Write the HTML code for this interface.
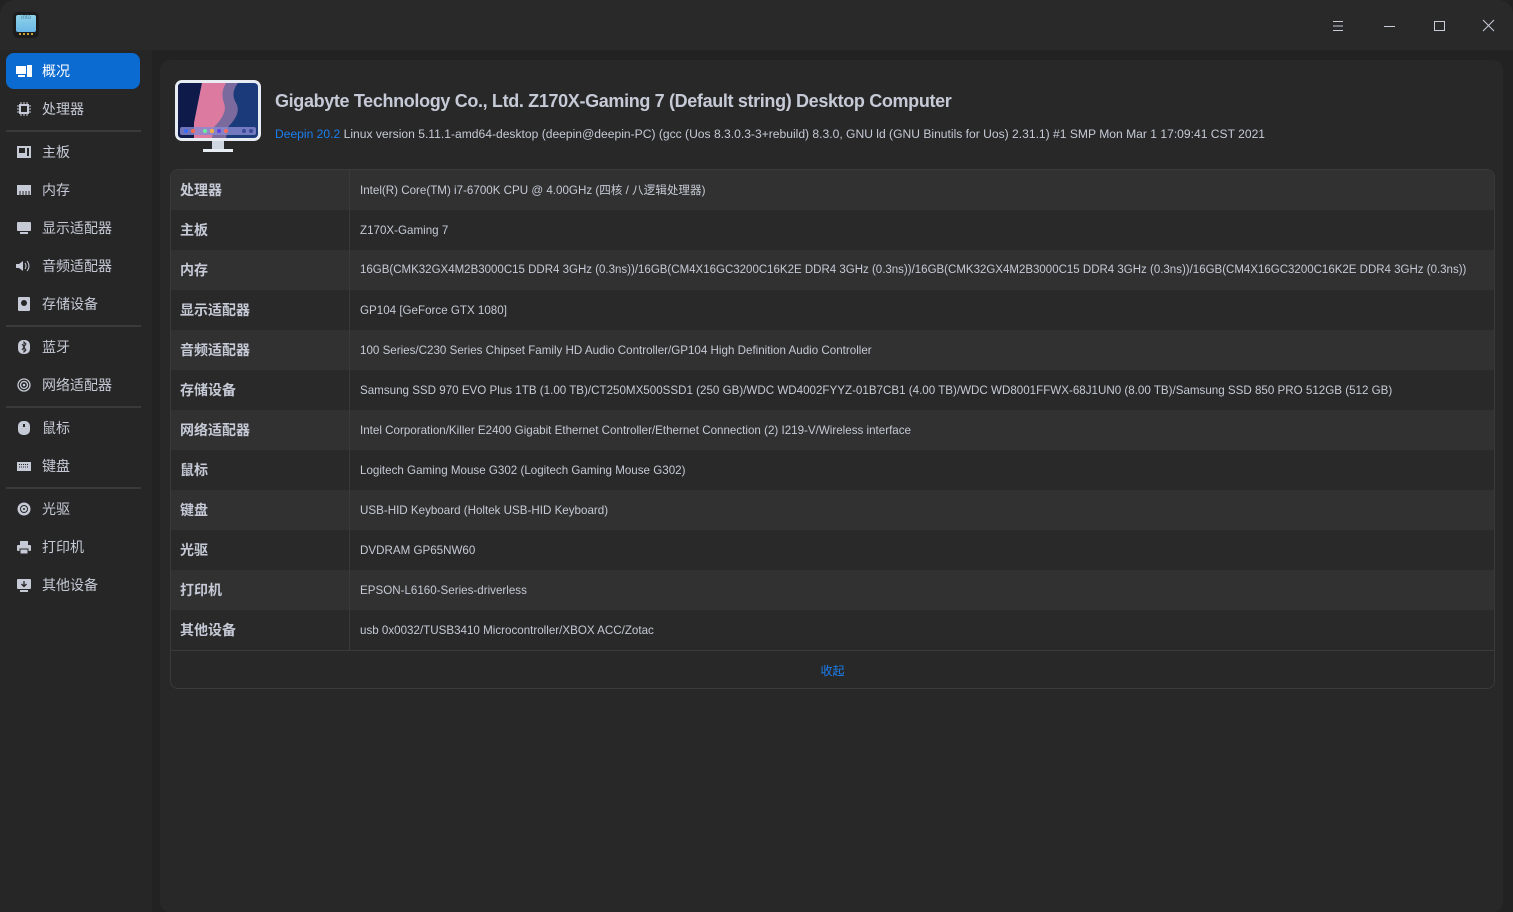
<!DOCTYPE html>
<html><head><meta charset="utf-8"><style>
*{margin:0;padding:0;box-sizing:border-box}
body{width:1513px;height:912px;background:#222;font-family:"Liberation Sans","Noto Sans CJK SC",sans-serif;color:#c5cad6;overflow:hidden;position:relative}
.win{position:absolute;inset:0;background:#222;border-radius:14px 14px 0 0;overflow:hidden}
.tb{position:absolute;left:0;top:0;width:1513px;height:50px;background:#292929}
.side{position:absolute;left:0;top:50px;width:152px;height:862px;background:#262626}
.main{position:absolute;left:152px;top:50px;right:0;bottom:0;background:#222}
.panel{position:absolute;left:160px;top:60px;width:1343px;height:852px;background:#282828;border-radius:10px}
.nav{position:absolute;left:6px;width:134px;height:36px;display:flex;align-items:center;font-size:14px;color:#c5cad6}
.nav .ic{width:16px;height:14px;margin-left:10px;margin-right:10px;display:flex;align-items:center;justify-content:center}
.nav.act{background:#0c6bd0;border-radius:8px;color:#fff}
.sep{position:absolute;left:6px;width:135px;height:2px;background:#3a3a3a}
.card{position:absolute;left:170px;top:169px;width:1325px;height:520px;border:1px solid #3a3a3a;border-radius:8px;overflow:hidden;background:#282828}
.row{height:40px;display:flex;align-items:center;font-size:11.6px}
.row:nth-child(odd){background:#313131}
.row:nth-child(even){background:#292929}
.k{flex:0 0 179px;width:179px;padding-left:9px;font-weight:bold;font-size:14px;border-right:1px solid #3a3a3a;height:40px;display:flex;align-items:center}
.v{padding-left:10px;white-space:nowrap}
</style></head><body><div class="win">
<div class="tb">
 <div style="position:absolute;left:13px;top:12px;width:26px;height:26px;background:#1c1c1c;border-radius:5px"><div style="position:absolute;left:3px;top:3px;width:20px;height:17px;background:linear-gradient(#8fd3e8,#6ab7e8);border-radius:2px;font-size:6px;color:#4a7fa0;text-align:center">info</div><div style="position:absolute;left:6px;top:21px;width:14px;height:2px;border-top:2px dotted #c9a23a"></div></div>
 <svg style="position:absolute;left:1332px;top:20px" width="12" height="12"><path d="M1 1.5h10M1 6h10M1 10.5h10" stroke="#c8ccd8" stroke-width="1"/></svg>
 <svg style="position:absolute;left:1383px;top:20px" width="13" height="12"><path d="M1 6.5h11" stroke="#c8ccd8" stroke-width="1"/></svg>
 <svg style="position:absolute;left:1433px;top:20px" width="13" height="12"><rect x="1.5" y="1.5" width="10" height="9" fill="none" stroke="#c8ccd8" stroke-width="1"/></svg>
 <svg style="position:absolute;left:1482px;top:19px" width="13" height="13"><path d="M1 1l11 11M12 1L1 12" stroke="#c8ccd8" stroke-width="1"/></svg>
</div>
<div class="side">
 <div class="nav act" style="top:3px"><span class="ic"><svg width="16" height="12"><rect x="0" y="1" width="10" height="8" fill="#fff"/><rect x="11" y="0" width="5" height="12" fill="#fff"/><rect x="2" y="10" width="7" height="2" fill="#fff"/></svg></span>概况</div>
 <div class="nav" style="top:41px"><span class="ic"><svg width="14" height="14"><rect x="2" y="2" width="10" height="10" fill="#c5cad6"/><path d="M4 0v14M7 0v14M10 0v14M0 4h14M0 7h14M0 10h14" stroke="#c5cad6" stroke-width="1"/><rect x="4" y="4" width="6" height="6" fill="#262626"/></svg></span>处理器</div>
 <div class="sep" style="top:80px"></div>
 <div class="nav" style="top:84px"><span class="ic"><svg width="14" height="12"><rect width="14" height="12" fill="#c5cad6"/><rect x="2" y="2" width="6" height="5" fill="#262626"/><rect x="10" y="2" width="2" height="8" fill="#262626"/></svg></span>主板</div>
 <div class="nav" style="top:122px"><span class="ic"><svg width="14" height="10"><rect width="14" height="10" fill="#c5cad6"/><path d="M3 6v4M6 6v4M9 6v4M12 6v4" stroke="#262626"/></svg></span>内存</div>
 <div class="nav" style="top:160px"><span class="ic"><svg width="14" height="12"><rect width="14" height="9" rx="1" fill="#c5cad6"/><rect x="3" y="10" width="8" height="2" fill="#c5cad6"/></svg></span>显示适配器</div>
 <div class="nav" style="top:198px"><span class="ic"><svg width="16" height="12"><path d="M0 4h3l4-3v10l-4-3H0z" fill="#c5cad6"/><path d="M9 3q2 3 0 6M11 1q4 5 0 10" stroke="#c5cad6" fill="none"/></svg></span>音频适配器</div>
 <div class="nav" style="top:236px"><span class="ic"><svg width="12" height="14"><rect width="12" height="14" rx="1" fill="#c5cad6"/><circle cx="6" cy="6" r="3" fill="#262626"/></svg></span>存储设备</div>
 <div class="sep" style="top:275px"></div>
 <div class="nav" style="top:279px"><span class="ic"><svg width="12" height="14"><rect width="12" height="14" rx="5" fill="#c5cad6"/><path d="M4 4l4 6-2 2V2l2 2-4 6" stroke="#262626" fill="none"/></svg></span>蓝牙</div>
 <div class="nav" style="top:317px"><span class="ic"><svg width="14" height="14"><circle cx="7" cy="7" r="6" stroke="#c5cad6" fill="none" stroke-width="1.3"/><circle cx="7" cy="7" r="3.5" stroke="#c5cad6" fill="none" stroke-width="1.3"/><circle cx="7" cy="7" r="1.3" fill="#c5cad6"/></svg></span>网络适配器</div>
 <div class="sep" style="top:356px"></div>
 <div class="nav" style="top:360px"><span class="ic"><svg width="12" height="14"><rect width="12" height="14" rx="5" fill="#c5cad6"/><rect x="5" y="3" width="2" height="3" fill="#262626"/></svg></span>鼠标</div>
 <div class="nav" style="top:398px"><span class="ic"><svg width="14" height="9"><rect width="14" height="9" fill="#c5cad6"/><path d="M2 2.5h10M2 5h10" stroke="#262626" stroke-dasharray="1 1"/></svg></span>键盘</div>
 <div class="sep" style="top:437px"></div>
 <div class="nav" style="top:441px"><span class="ic"><svg width="14" height="14"><circle cx="7" cy="7" r="6.5" fill="#c5cad6"/><circle cx="7" cy="7" r="3.5" fill="none" stroke="#262626"/><circle cx="7" cy="7" r="1" fill="#262626"/></svg></span>光驱</div>
 <div class="nav" style="top:479px"><span class="ic"><svg width="14" height="13"><rect x="3" y="0" width="8" height="4" fill="#c5cad6"/><rect x="0" y="4" width="14" height="6" rx="1" fill="#c5cad6"/><rect x="3" y="8" width="8" height="5" fill="#c5cad6" stroke="#262626"/></svg></span>打印机</div>
 <div class="nav" style="top:517px"><span class="ic"><svg width="14" height="13"><rect width="14" height="10" rx="1" fill="#c5cad6"/><path d="M7 2v5M4.5 5L7 7.5 9.5 5" stroke="#262626" fill="none" stroke-width="1.3"/><rect x="3" y="11" width="8" height="2" fill="#c5cad6"/></svg></span>其他设备</div>
</div>
<div class="main"></div>
<div class="panel"></div>
<svg style="position:absolute;left:174px;top:79px" width="88" height="75">
 <rect x="1" y="1" width="86" height="61" rx="7" fill="#e8ecf3"/>
 <rect x="4" y="4" width="80" height="55" rx="4" fill="#1a3a7a"/>
 <path d="M4 8q0-4 4-4h20l-8 40v15H8q-4 0-4-4z" fill="#0e1a4a"/>
 <path d="M28 4h36q-8 10-2 20t-8 24l-2 11H20l0-15z" fill="#7a6a9e"/>
 <path d="M28 4h24q-6 10-2 20t-10 24l-2 11H20l0-15z" fill="#dc7aa0"/>
 <rect x="6" y="48" width="76" height="8" rx="2" fill="#8a8ad0" opacity=".8"/>
 <circle cx="12" cy="52" r="2" fill="#3a6aff"/><circle cx="19" cy="52" r="2" fill="#ff6a4a"/><circle cx="31" cy="52" r="2" fill="#6af0a0"/><circle cx="38" cy="52" r="2" fill="#ffb040"/><circle cx="45" cy="52" r="2" fill="#6040e0"/><circle cx="52" cy="52" r="2" fill="#ff6a5a"/><circle cx="70" cy="52" r="2" fill="#3a4a9a"/><circle cx="77" cy="52" r="2" fill="#3a4a9a"/>
 <rect x="38" y="62" width="12" height="8" fill="#d0d6e0"/><rect x="29" y="70" width="30" height="3" fill="#e8ecf3"/>
</svg>
<div style="position:absolute;left:275px;top:91px;font-size:18px;letter-spacing:-0.35px;font-weight:bold;color:#c5cad6;white-space:nowrap">Gigabyte Technology Co., Ltd. Z170X-Gaming 7 (Default string) Desktop Computer</div>
<div style="position:absolute;left:275px;top:127px;font-size:12.1px;white-space:nowrap"><span style="color:#1a7ff0">Deepin 20.2</span> Linux version 5.11.1-amd64-desktop (deepin@deepin-PC) (gcc (Uos 8.3.0.3-3+rebuild) 8.3.0, GNU ld (GNU Binutils for Uos) 2.31.1) #1 SMP Mon Mar 1 17:09:41 CST 2021</div>
<div class="card">
 <div class="row"><div class="k">处理器</div><div class="v">Intel(R) Core(TM) i7-6700K CPU @ 4.00GHz (四核 / 八逻辑处理器)</div></div>
 <div class="row"><div class="k">主板</div><div class="v">Z170X-Gaming 7</div></div>
 <div class="row"><div class="k">内存</div><div class="v" style="font-size:11.5px">16GB(CMK32GX4M2B3000C15 DDR4 3GHz (0.3ns))/16GB(CM4X16GC3200C16K2E DDR4 3GHz (0.3ns))/16GB(CMK32GX4M2B3000C15 DDR4 3GHz (0.3ns))/16GB(CM4X16GC3200C16K2E DDR4 3GHz (0.3ns))</div></div>
 <div class="row"><div class="k">显示适配器</div><div class="v">GP104 [GeForce GTX 1080]</div></div>
 <div class="row"><div class="k">音频适配器</div><div class="v">100 Series/C230 Series Chipset Family HD Audio Controller/GP104 High Definition Audio Controller</div></div>
 <div class="row"><div class="k">存储设备</div><div class="v">Samsung SSD 970 EVO Plus 1TB (1.00 TB)/CT250MX500SSD1 (250 GB)/WDC WD4002FYYZ-01B7CB1 (4.00 TB)/WDC WD8001FFWX-68J1UN0 (8.00 TB)/Samsung SSD 850 PRO 512GB (512 GB)</div></div>
 <div class="row"><div class="k">网络适配器</div><div class="v">Intel Corporation/Killer E2400 Gigabit Ethernet Controller/Ethernet Connection (2) I219-V/Wireless interface</div></div>
 <div class="row"><div class="k">鼠标</div><div class="v">Logitech Gaming Mouse G302 (Logitech Gaming Mouse G302)</div></div>
 <div class="row"><div class="k">键盘</div><div class="v">USB-HID Keyboard (Holtek USB-HID Keyboard)</div></div>
 <div class="row"><div class="k">光驱</div><div class="v">DVDRAM GP65NW60</div></div>
 <div class="row"><div class="k">打印机</div><div class="v">EPSON-L6160-Series-driverless</div></div>
 <div class="row"><div class="k">其他设备</div><div class="v">usb 0x0032/TUSB3410 Microcontroller/XBOX ACC/Zotac</div></div>
 <div style="height:39px;border-top:1px solid #3a3a3a;display:flex;align-items:center;justify-content:center;color:#1a7ff0;font-size:12px">收起</div>
</div>
</div></body></html>
